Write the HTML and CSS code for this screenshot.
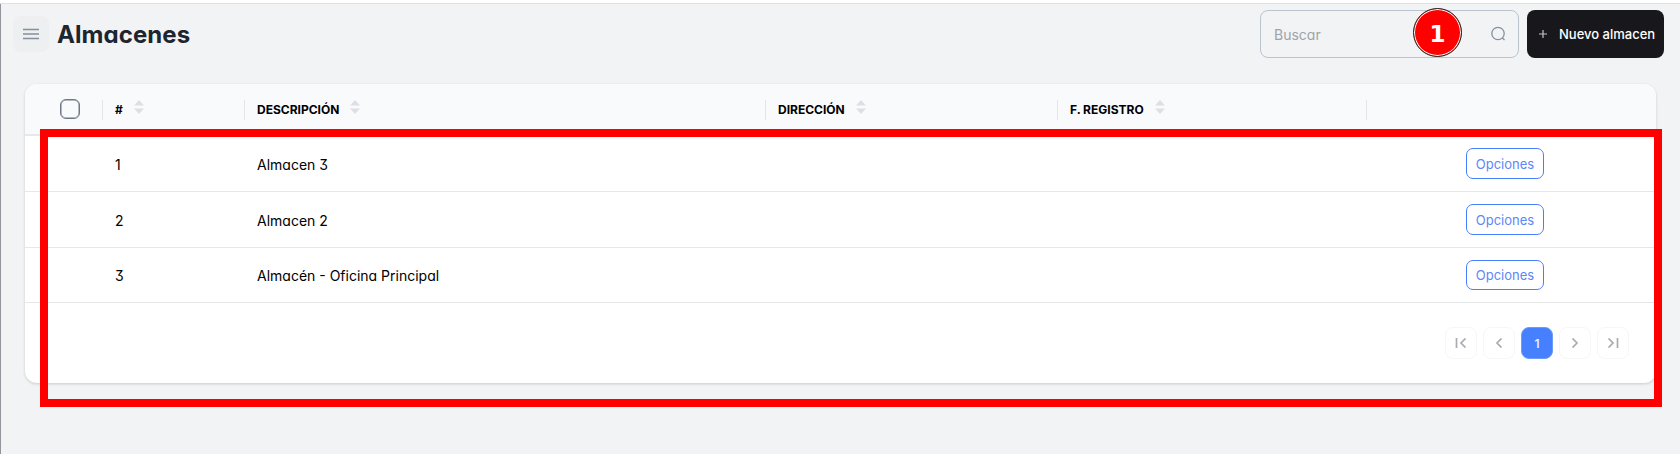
FILE: index.html
```html
<!DOCTYPE html>
<html lang="es">
<head>
<meta charset="utf-8">
<title>Almacenes</title>
<link rel="stylesheet" href="styles.css">
</head>
<body>
<div class="page">
  <header class="topbar">
    <button class="menu" aria-label="Menú"><svg width="16" height="12" viewBox="0 0 16 12"><path d="M0 1.5h16M0 6h16M0 10.5h16" stroke="#84909f" stroke-width="1.5"/></svg></button>
    <h1 class="title">Almacenes</h1>
    <div class="search"><span class="placeholder">Buscar</span>
      <svg width="16" height="16" viewBox="0 0 16 16" fill="none" stroke="#84909f" stroke-width="1.3"><circle cx="8" cy="7.5" r="6.2"/><path d="M12.500 12l2 2"/></svg>
      <span class="badge">1</span>
    </div>
    <button class="new"><svg width="8" height="8" viewBox="0 0 8 8"><path d="M4 0v8M0 4h8" stroke="#c4c4c8" stroke-width="1.2"/></svg><span class="new-label">Nuevo almacen</span></button>
  </header>
  <main class="card">
    <div class="row head">
      <div class="cell check"><span class="box"></span></div>
      <div class="cell"><span class="label">#</span><svg class="sort" width="10" height="14" viewBox="0 0 10 14"><path d="M5 0l5 5.500H0zM0 8.500h10L5 14z"/></svg></div>
      <div class="cell"><span class="label">DESCRIPCIÓN</span><svg class="sort" width="10" height="14" viewBox="0 0 10 14"><path d="M5 0l5 5.500H0zM0 8.500h10L5 14z"/></svg></div>
      <div class="cell"><span class="label">DIRECCIÓN</span><svg class="sort" width="10" height="14" viewBox="0 0 10 14"><path d="M5 0l5 5.500H0zM0 8.500h10L5 14z"/></svg></div>
      <div class="cell"><span class="label">F. REGISTRO</span><svg class="sort" width="10" height="14" viewBox="0 0 10 14"><path d="M5 0l5 5.500H0zM0 8.500h10L5 14z"/></svg></div>
      <div class="cell"></div>
    </div>
    <div class="row"><div></div><div class="data">1</div><div class="data">Almacen 3</div><div></div><div></div><div class="action"><button class="options">Opciones</button></div></div>
    <div class="row"><div></div><div class="data">2</div><div class="data">Almacen 2</div><div></div><div></div><div class="action"><button class="options">Opciones</button></div></div>
    <div class="row last"><div></div><div class="data">3</div><div class="data">Almacén - Oficina Principal</div><div></div><div></div><div class="action"><button class="options">Opciones</button></div></div>
    <nav class="pager">
      <button class="pg"><svg width="12" height="10" viewBox="0 0 12 10"><path d="M1.500 0v10M10.500 .5L6 5 10.500 9.500"/></svg></button>
      <button class="pg"><svg width="12" height="10" viewBox="0 0 12 10"><path d="M8.500 .5L4 5l4.500 4.500"/></svg></button>
      <button class="pg current">1</button>
      <button class="pg"><svg width="12" height="10" viewBox="0 0 12 10"><path d="M3.500 .5L8 5 3.500 9.500"/></svg></button>
      <button class="pg"><svg width="12" height="10" viewBox="0 0 12 10"><path d="M10.500 0v10M1.500 .5L6 5 1.500 9.500"/></svg></button>
    </nav>
  </main>
  <div class="frame"></div>
</div>
</body>
</html>
```
FILE: styles.css
```css
* { box-sizing: border-box; }
body { margin: 0; background: #f2f3f5; font-family: Inter, "Liberation Sans", sans-serif; font-feature-settings: "cv11", "ss01"; color: #000; }
button { font: inherit; font-feature-settings: inherit; padding: 0; }
svg { display: block; flex: none; }
.page { position: relative; height: 454px; border-top: 3px solid #fff; box-shadow: inset 0 1px #dedfe1, inset 1px 0 #94949c; overflow: hidden; }
.topbar { display: flex; align-items: center; height: 62px; padding: 0 16px 0 13px; }
.menu { width: 36px; height: 36px; border: 0; border-radius: 8px; background: #edeff1; display: flex; align-items: center; justify-content: center; }
.title { margin: 2px 0 0 8px; font-size: 24px; line-height: 32px; font-weight: 700; color: #1c2530; letter-spacing: 0.08px; }
.search { position: relative; margin-left: auto; width: 259px; height: 48px; border: 1px solid #bac4ce; border-radius: 8px; display: flex; align-items: center; justify-content: space-between; padding: 0 12px 0 13px; }
.placeholder { margin-top: 1px; font-size: 14px; color: #9fa3a9; }
.badge { position: absolute; left: 152px; top: -3px; width: 49px; height: 49px; border-radius: 50%; border: 1px solid #222; background: #f00; box-shadow: inset 0 0 0 1px #fff; color: #fff; font: 700 23px/50px "DejaVu Sans", sans-serif; text-align: center; }
.new { width: 137px; height: 48px; margin-left: 8px; border: 0; border-radius: 8px; background: #18181c; color: #fff; display: flex; align-items: center; padding-left: 12px; gap: 12px; }
.new-label { font-size: 13px; font-weight: 500; white-space: nowrap; font-feature-settings: normal; }
.card { margin: 19px 24px 0 25px; height: 299px; background: #fff; border-radius: 12px; box-shadow: 0 1px 3px rgba(0,0,0,.17); }
.row { display: grid; grid-template-columns: 77px 142px 521px 292px 309px 1fr; height: 56px; border-bottom: 1px solid #e6e7e9; align-items: center; }
.row.last { height: 55px; }
.head { height: 52px; padding-top: 2px; border-bottom: 2px solid #e6e8eb; background: #f9fafc; border-radius: 12px 12px 0 0; }
.cell { height: 20px; display: flex; align-items: center; border-left: 1px solid #e3e5e8; padding-left: 12px; }
.check { border: 0; padding: 0 0 2px 35px; }
.box { flex: none; width: 20px; height: 20px; border: 1.500px solid #6d7987; border-radius: 6px; box-shadow: inset 0 0 0 .5px #6d7987; }
.label { font-size: 12px; font-weight: 700; line-height: 16px; white-space: nowrap; }
.sort { margin: -6px 0 0 11px; fill: #dce0e4; }
.data { padding: 2px 0 0 13px; font-size: 14px; white-space: nowrap; }
.last .data { padding-top: 0; }
.action { padding-left: 100px; }
.options { display: block; width: 78px; height: 31px; border: 1px solid #4680ff; border-radius: 7px; background: #fff; color: #5d87f7; font-size: 13px; font-feature-settings: normal; }
.last .options { height: 30px; }
.pager { display: flex; justify-content: flex-end; gap: 6px; padding: 24px 27px 0 0; }
.pg { width: 32px; height: 32px; display: flex; align-items: center; justify-content: center; border: 1px solid #f6f7f8; border-radius: 8px; background: #fff; }
.pg path { fill: none; stroke: #a8abb0; stroke-width: 1.700; }
.current { background: #4680ff; border-color: #6c9aff; color: #e6eeff; font-size: 12px; font-weight: 600; }
.frame { position: absolute; left: 40px; top: 126px; width: 1622px; height: 278px; border: 8px solid #f00; }
```
